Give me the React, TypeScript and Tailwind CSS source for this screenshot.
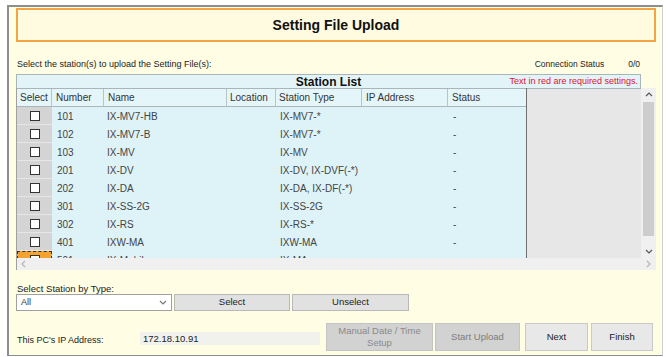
import React from "react";

const rows: [string, string, string][] = [
  ["101", "IX-MV7-HB", "IX-MV7-*"],
  ["102", "IX-MV7-B", "IX-MV7-*"],
  ["103", "IX-MV", "IX-MV"],
  ["201", "IX-DV", "IX-DV, IX-DVF(-*)"],
  ["202", "IX-DA", "IX-DA, IX-DF(-*)"],
  ["301", "IX-SS-2G", "IX-SS-2G"],
  ["302", "IX-RS", "IX-RS-*"],
  ["401", "IXW-MA", "IXW-MA"],
  ["501", "IX-Mobile", "IX-MA"],
];

const cols = "grid grid-cols-[35px_52px_123px_49px_86px_86px_78px]";

function Caret({ dir, color = "#555" }: { dir: "up" | "down" | "left" | "right"; color?: string }) {
  const pts =
    dir === "up"
      ? "1,5 4,2 7,5"
      : dir === "down"
      ? "1,2 4,5 7,2"
      : dir === "left"
      ? "5,1 2,4 5,7"
      : "2,1 5,4 2,7";
  return (
    <svg width="8" height="8" viewBox="0 0 8 8">
      <polyline points={pts} fill="none" stroke={color} strokeWidth="1.2" />
    </svg>
  );
}

export default function App() {
  return (
    <div className="w-[668px] h-[357px] bg-white font-['Liberation_Sans',Arial,sans-serif] text-[#222] overflow-hidden">
      <div className="ml-[7px] mt-[5px] w-[656px] h-[351px] bg-[#fffde3] border-t-2 border-l-2 border-r border-b border-[#8e8e8e] border-r-[#cfcfcf] pl-[7px] pr-[6px] flex flex-col">
        {/* Title */}
        <div className="mt-[1px] w-[640px] h-[34px] shrink-0 border-2 border-[#f2a447] bg-[#fffbe1] flex items-center justify-center text-[14px] font-bold text-[#111]">
          Setting File Upload
        </div>

        {/* Instruction row */}
        <div className="mt-[16px] w-[640px] h-[12px] shrink-0 flex items-center text-[9px] leading-[12px]">
          <span className="pl-[1px]">Select the station(s) to upload the Setting File(s):</span>
          <span className="ml-auto text-[8.5px]">Connection Status</span>
          <span className="ml-[24px] mr-[16px] text-[8.5px]">0/0</span>
        </div>

        {/* Station list */}
        <div className="mt-[4px] w-[640px] shrink-0 flex flex-col">
          <div className="w-[625px] h-[14px] border border-b-0 border-[#a9b5b9] bg-[#e3f4f9] grid grid-cols-[1fr_auto_1fr] items-center">
            <span />
            <span className="text-[12px] font-bold leading-none text-[#111]">Station List</span>
            <span className="justify-self-end pr-[2px] text-[9px] leading-none text-[#e0102f]">
              Text in red are required settings.
            </span>
          </div>
          <div className="flex h-[170px] border-l border-[#a0a0a0]">
            <div className="w-[510px] flex flex-col bg-[#def3f8] border-r border-[#6f6f6f]">
              <div className={`${cols} h-[19px] border-t border-b border-[#a9b5b9] bg-[#e5f6fa] text-[10px] text-[#333]`}>
                <div className="flex items-center justify-center border-r border-[#b5c5c9]">Select</div>
                <div className="flex items-center pl-[4px] border-r border-[#b5c5c9]">Number</div>
                <div className="flex items-center pl-[4px] border-r border-[#b5c5c9]">Name</div>
                <div className="flex items-center pl-[3px] border-r border-[#b5c5c9]">Location</div>
                <div className="flex items-center pl-[3px] border-r border-[#b5c5c9]">Station Type</div>
                <div className="flex items-center pl-[4px] border-r border-[#b5c5c9]">IP Address</div>
                <div className="flex items-center pl-[4px]">Status</div>
              </div>
              <div className="h-[151px] overflow-hidden">
                {rows.map((r, i) => {
                  const last = i === rows.length - 1;
                  return (
                    <div key={r[0]} className={`${cols} h-[18px] text-[10px] text-[#444]`}>
                      <div
                        className={`flex items-center justify-center ${
                          last
                            ? "bg-[#f4a32e] border border-dashed border-[#333]"
                            : "bg-[#d4d4d4] border-b border-[#e6e6e6]"
                        }`}
                      >
                        <div className="w-[10px] h-[10px] bg-white border border-[#333]" />
                      </div>
                      <div className="flex items-center pl-[5px]">{r[0]}</div>
                      <div className="flex items-center pl-[3px]">{r[1]}</div>
                      <div />
                      <div className="flex items-center pl-[4px]">{r[2]}</div>
                      <div />
                      <div className="flex items-center pl-[5px]">-</div>
                    </div>
                  );
                })}
              </div>
            </div>
            <div className="w-[114px] bg-[#e7e7e7] border-t border-[#a9b5b9]" />
            <div className="w-[15px] bg-[#f0f0f0] flex flex-col items-center">
              <div className="h-[14px] flex items-center justify-center">
                <Caret dir="up" />
              </div>
              <div className="w-[11px] h-[134px] bg-[#cdcdcd]" />
              <div className="flex-1" />
              <div className="h-[13px] flex items-center justify-center">
                <Caret dir="down" />
              </div>
            </div>
          </div>
          <div className="w-[640px] h-[12px] bg-[#f0f0f0] border-l border-[#a0a0a0] flex items-center justify-between px-[3px]">
            <Caret dir="left" color="#b5b5b5" />
            <Caret dir="right" color="#b5b5b5" />
          </div>
        </div>

        {/* Select station by type */}
        <div className="mt-[13px] h-[11px] shrink-0 text-[9.5px] leading-[11px] pl-[1px]">Select Station by Type:</div>
        <div className="h-[17px] shrink-0 flex gap-[2px]">
          <div className="w-[156px] bg-white border border-[#a0a0a0] flex items-center pl-[4px] pr-[4px] text-[9px] text-[#333]">
            <span>All</span>
            <span className="ml-auto">
              <Caret dir="down" color="#777" />
            </span>
          </div>
          <div className="w-[116px] bg-[#e1e1e1] border border-[#b9b9b9] flex items-center justify-center text-[9.5px]">
            Select
          </div>
          <div className="w-[117px] bg-[#e1e1e1] border border-[#b9b9b9] flex items-center justify-center text-[9.5px]">
            Unselect
          </div>
        </div>

        {/* Bottom row */}
        <div className="mt-[12px] h-[28px] shrink-0 flex items-start">
          <div className="w-[124px] mt-[11px] pl-[1px] text-[9px] leading-[12px]">This PC's IP Address:</div>
          <div className="w-[180px] h-[13px] mt-[9px] bg-[#f2f2ec] pl-[3px] text-[9.5px] leading-[13px] text-[#222]">
            172.18.10.91
          </div>
          <div className="ml-[6px] w-[107px] h-[28px] bg-[#d2d2d2] border border-[#c4c4c4] flex items-center justify-center text-center text-[9.5px] leading-[12px] text-[#8a8a8a]">
            Manual Date / Time
            <br />
            Setup
          </div>
          <div className="ml-[2px] w-[85px] h-[28px] bg-[#d2d2d2] border border-[#c4c4c4] flex items-center justify-center text-[9.5px] text-[#7c7c7c]">
            Start Upload
          </div>
          <div className="ml-[5px] w-[63px] h-[28px] bg-[#e8e8e8] border border-[#c9c9c9] flex items-center justify-center text-[9.5px] text-[#222]">
            Next
          </div>
          <div className="ml-[3px] w-[62px] h-[28px] bg-[#e8e8e8] border border-[#c9c9c9] flex items-center justify-center text-[9.5px] text-[#222]">
            Finish
          </div>
        </div>
      </div>
    </div>
  );
}
